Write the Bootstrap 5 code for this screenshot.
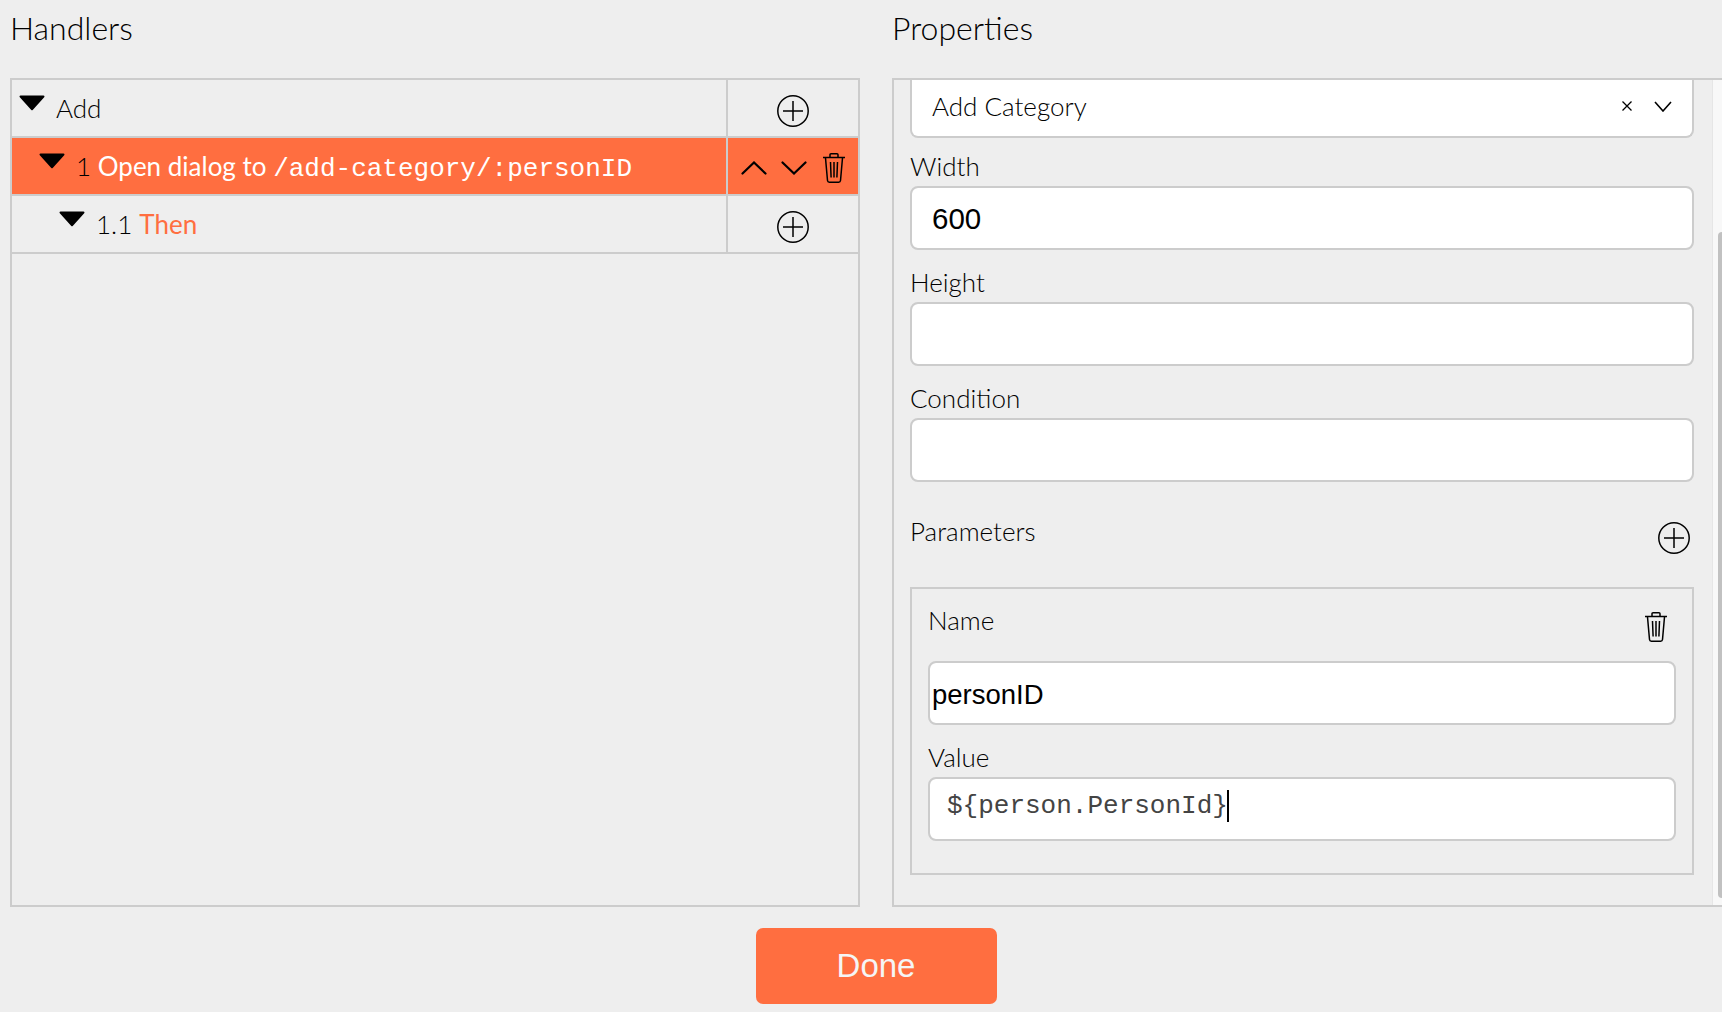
<!DOCTYPE html>
<html>
<head>
  <meta charset="utf-8">
  <title>Handlers</title>
  <link href="https://cdn.jsdelivr.net/npm/bootstrap@5.3.0/dist/css/bootstrap.min.css" rel="stylesheet">
  <style>
    body {
      background: #eeeeee;
      color: #000;
      font-family: Lato, "Liberation Sans", sans-serif;
      font-weight: 300;
      font-size: 26px;
      line-height: 34px;
      overflow: hidden;
    }
    .page-wrap { padding-left: 10px; width: 1722px; height: 1012px; }
    .col-head { height: 78px; font-size: 32px; padding-top: 9px; line-height: 38px; }
    .pane-left { width: 850px; }
    .pane-right { width: 830px; margin-left: 32px; }
    .pane-box {
      height: 829px;
      border: 2px solid #cccccc;
      position: relative;
      overflow: hidden;
    }
    .pane-right .pane-box { border-right: 0; }

    /* tree */
    .tree-row { height: 58px; border-bottom: 2px solid #cccccc; }
    .tree-row.is-active { background: #ff6e40; color: #fff; }
    .tree-row.is-active .tree-label { font-weight: 400; }
    .tree-label { flex: 1 1 auto; padding: 11px 0 0 7px; min-width: 0; white-space: nowrap; }
    .tree-row.lvl-1 .tree-label { padding-left: 27px; }
    .tree-row.lvl-2 .tree-label { padding-left: 47px; }
    .tree-tools { width: 132px; height: 56px; flex: none; border-left: 2px solid #cccccc; }
    .tools-gap { gap: 14px; }
    .trash-gap { margin-left: 2px; }
    .plus-nudge { margin-top: 6px; }
    .caret-down { width: 26px; height: 16px; margin: 4px 11px 0 0; flex: none; }
    .num { color: #000; font-weight: 300; }
    .accent { color: #ff6e40; font-weight: 400; }
    .mono { font-family: "Liberation Mono", monospace; font-weight: 400; }

    /* properties */
    .form-area { padding: 0 28px 0 16px; }
    .field-label { display: block; margin: 0 0 3px; line-height: 34px; }
    .field { margin-bottom: 15px; }
    .form-control.soft-input {
      height: 64px;
      border: 2px solid #cccccc;
      border-radius: 8px;
      font-family: "Liberation Sans", sans-serif;
      font-weight: 400;
      font-size: 26px;
      color: #000;
      padding: 2px 20px 0;
      box-shadow: none;
    }
    .form-control.soft-input.num-val { font-size: 29.500px; }
    .form-control.soft-input.tight { padding: 3px 2px 0; font-size: 27.500px; }
    .form-control.soft-input.mono-val { font-family: "Liberation Mono", monospace; padding: 0 16px 6px 17px; color: #444; }
    .name-field { margin-bottom: 15px; }
    .select-fake {
      height: 58px;
      background: #fff;
      border: 2px solid #cccccc;
      border-top: 0;
      border-radius: 0 0 8px 8px;
      padding: 0 20px 4px 20px;
      margin-bottom: 11px;
    }
    .sel-tools { gap: 21px; }
    .params-head { margin-top: 34px; margin-bottom: 33px; }
    .lift-text { margin-top: -2px; }
    .plus-offset { margin-top: 6px; margin-right: 4px; }
    .param-box { border: 2px solid #cccccc; padding: 16px 16px 17px; }
    .name-row { margin-bottom: 18px; }
    .trash-offset { margin-top: 6px; margin-right: 9px; }
    .value-wrap { position: relative; margin-bottom: 15px; }
    .fake-caret {
      position: absolute; left: 299px; top: 13px;
      width: 2px; height: 32px; background: #000;
    }
    .scroll-track {
      position: absolute; top: 0; right: 0; bottom: 0; width: 10px;
      background: #f8f8f8; border-left: 1px solid #e6e6e6;
    }
    .scroll-thumb {
      position: absolute; top: 152px; bottom: 7px; right: 0; width: 4px;
      background: #c1c1c1; border-radius: 4px 0 0 4px;
    }
    .done-wrap { padding-left: 20px; }
    .done-btn.btn {
      width: 241px; height: 76px;
      margin-top: 21px;
      background: #ff6e40; border: 0; border-radius: 7px;
      color: #f5f5f5; font-size: 33px; font-weight: 400;
      font-family: "Liberation Sans", sans-serif;
    }
  </style>
</head>
<body>
<svg width="0" height="0" class="position-absolute">
  <defs>
    <symbol id="ico-caret" viewBox="0 0 26 16"><path d="M1.500 0.500h23a1 1 0 0 1 .7 1.700L13.700 15a1 1 0 0 1-1.400 0L.8 2.200A1 1 0 0 1 1.500.5z" fill="#000"/></symbol>
    <symbol id="ico-plus" viewBox="0 0 32 32"><circle cx="16" cy="16" r="15.200" fill="none" stroke="#000" stroke-width="1.500"/><path d="M16 6v20M6 16h20" stroke="#000" stroke-width="1.500" fill="none"/></symbol>
    <symbol id="ico-trash" viewBox="0 0 22 30"><g fill="none" stroke="#000" stroke-width="1.500"><path d="M0 4.500h22M7 4V1.800Q7 .8 8 .8h6q1 0 1 1V4"/><path d="M2.500 5l2 22.500q.2 1.700 1.800 1.700h9.400q1.600 0 1.800-1.700L19.500 5"/><path d="M7.500 9l.6 15.500M11 9v15.500M14.500 9l-.6 15.500"/></g></symbol>
    <symbol id="ico-up" viewBox="0 0 26 14"><path d="M1.500 12.500L13 1.500l11.500 11" fill="none" stroke="#000" stroke-width="2.200" stroke-linecap="round"/></symbol>
    <symbol id="ico-down" viewBox="0 0 26 14"><path d="M1.500 1.500L13 12.500l11.500-11" fill="none" stroke="#000" stroke-width="2.200" stroke-linecap="round"/></symbol>
  </defs>
</svg>

<div class="page-wrap">
  <div class="d-flex">
    <div class="pane-left">
      <div class="col-head">Handlers</div>
      <div class="pane-box">
        <div class="tree-row d-flex">
          <div class="tree-label d-flex"><svg class="caret-down"><use href="#ico-caret"/></svg><span>Add</span></div>
          <div class="tree-tools d-flex align-items-center justify-content-center"><svg width="32" height="32" class="plus-nudge"><use href="#ico-plus"/></svg></div>
        </div>
        <div class="tree-row lvl-1 is-active d-flex">
          <div class="tree-label d-flex"><svg class="caret-down"><use href="#ico-caret"/></svg><span><span class="num">1</span> Open dialog to <span class="mono">/add-category/:personID</span></span></div>
          <div class="tree-tools tools-gap d-flex align-items-center justify-content-center">
            <svg width="26" height="14" class="mt-1"><use href="#ico-up"/></svg>
            <svg width="26" height="14" class="mt-1"><use href="#ico-down"/></svg>
            <svg width="22" height="30" class="mt-1 trash-gap"><use href="#ico-trash"/></svg>
          </div>
        </div>
        <div class="tree-row lvl-2 d-flex">
          <div class="tree-label d-flex"><svg class="caret-down"><use href="#ico-caret"/></svg><span><span class="num">1.1</span> <span class="accent">Then</span></span></div>
          <div class="tree-tools d-flex align-items-center justify-content-center"><svg width="32" height="32" class="plus-nudge"><use href="#ico-plus"/></svg></div>
        </div>
      </div>
    </div>

    <div class="pane-right">
      <div class="col-head">Properties</div>
      <div class="pane-box">
        <div class="form-area">
          <div class="select-fake d-flex align-items-center justify-content-between">
            <span>Add Category</span>
            <span class="sel-tools d-flex align-items-center">
              <svg width="12" height="12" viewBox="0 0 12 12"><path d="M1.500 1.500l9 9M10.500 1.500l-9 9" stroke="#000" stroke-width="1.300" fill="none"/></svg>
              <svg width="18" height="11" viewBox="0 0 18 11"><path d="M1 1l8 9 8-9" stroke="#000" stroke-width="1.600" fill="none"/></svg>
            </span>
          </div>
          <div class="field">
            <label class="field-label">Width</label>
            <input class="form-control soft-input num-val" value="600">
          </div>
          <div class="field">
            <label class="field-label">Height</label>
            <input class="form-control soft-input">
          </div>
          <div class="field">
            <label class="field-label">Condition</label>
            <input class="form-control soft-input">
          </div>
          <div class="params-head d-flex justify-content-between align-items-start">
            <span class="lift-text">Parameters</span>
            <svg width="32" height="32" class="plus-offset"><use href="#ico-plus"/></svg>
          </div>
          <div class="param-box">
            <div class="name-row d-flex justify-content-between align-items-start">
              <span class="lift-text">Name</span>
              <svg width="22" height="32" class="trash-offset"><use href="#ico-trash"/></svg>
            </div>
            <div class="name-field"><input class="form-control soft-input tight" value="personID"></div>
            <label class="field-label">Value</label>
            <div class="value-wrap">
              <input class="form-control soft-input mono-val" value="${person.PersonId}">
              <span class="fake-caret"></span>
            </div>
          </div>
        </div>
        <div class="scroll-track"><div class="scroll-thumb"></div></div>
      </div>
    </div>
  </div>
  <div class="text-center done-wrap">
    <button class="btn done-btn" type="button">Done</button>
  </div>
</div>
<script src="https://cdn.jsdelivr.net/npm/bootstrap@5.3.0/dist/js/bootstrap.bundle.min.js"></script>
</body>
</html>
